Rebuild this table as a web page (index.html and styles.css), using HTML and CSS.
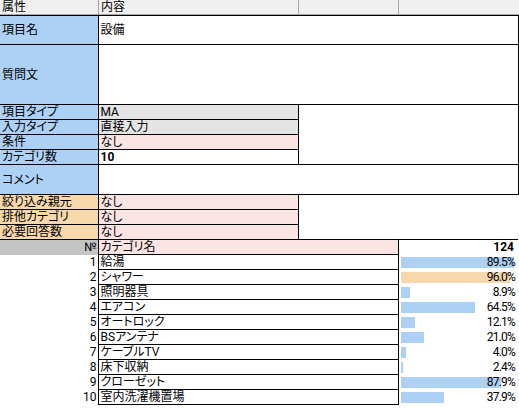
FILE: index.html
```html
<!DOCTYPE html>
<html lang="ja">
<head>
<meta charset="utf-8">
<title>設備</title>
<link rel="stylesheet" href="styles.css">
</head>
<body>
<div class="sheet">
  <div class="hdr">
    <div class="hc hc-a">属性</div>
    <div class="hc hc-b">内容</div>
    <div class="hc hc-c"></div>
    <div class="hc hc-d"></div>
  </div>
  <table class="grid">
    <colgroup><col class="ca"><col class="cb"><col class="cc"><col class="cd"></colgroup>
    <tr class="h29"><td class="lbl blue">項目名</td><td colspan="3" class="val edge">設備</td></tr>
    <tr class="h60"><td class="lbl blue">質問文</td><td colspan="3" class="val edge"></td></tr>
    <tr class="h15"><td class="lbl blue">項目タイプ</td><td class="val gray">MA</td><td colspan="2" rowspan="4" class="val edge"></td></tr>
    <tr class="h15"><td class="lbl blue">入力タイプ</td><td class="val gray">直接入力</td></tr>
    <tr class="h15"><td class="lbl blue">条件</td><td class="val pink">なし</td></tr>
    <tr class="h15"><td class="lbl blue">カテゴリ数</td><td class="val bold">10</td></tr>
    <tr class="h30"><td class="lbl blue">コメント</td><td colspan="3" class="val edge"></td></tr>
    <tr class="h15"><td class="lbl orange">絞り込み親元</td><td class="val pink">なし</td><td colspan="2" rowspan="3" class="blank"></td></tr>
    <tr class="h15"><td class="lbl orange">排他カテゴリ</td><td class="val pink">なし</td></tr>
    <tr class="h15"><td class="lbl orange">必要回答数</td><td class="val pink">なし</td></tr>
    <tr class="h15 cat-head"><td class="no-h">№</td><td colspan="2" class="val pink">カテゴリ名</td><td class="total">124</td></tr>
    <tr class="h15"><td class="no">1</td><td colspan="2" class="val">給湯</td><td class="barcell"><div class="bar-wrap"><div class="bar" style="width:113px"></div><span class="pct">89.5%</span></div></td></tr>
    <tr class="h15"><td class="no">2</td><td colspan="2" class="val">シャワー</td><td class="barcell"><div class="bar-wrap"><div class="bar bar-max" style="width:109px"></div><span class="pct">96.0%</span></div></td></tr>
    <tr class="h15"><td class="no">3</td><td colspan="2" class="val">照明器具</td><td class="barcell"><div class="bar-wrap"><div class="bar" style="width:9px"></div><span class="pct">8.9%</span></div></td></tr>
    <tr class="h15"><td class="no">4</td><td colspan="2" class="val">エアコン</td><td class="barcell"><div class="bar-wrap"><div class="bar" style="width:74px"></div><span class="pct">64.5%</span></div></td></tr>
    <tr class="h15"><td class="no">5</td><td colspan="2" class="val">オートロック</td><td class="barcell"><div class="bar-wrap"><div class="bar" style="width:14px"></div><span class="pct">12.1%</span></div></td></tr>
    <tr class="h15"><td class="no">6</td><td colspan="2" class="val">BSアンテナ</td><td class="barcell"><div class="bar-wrap"><div class="bar" style="width:23px"></div><span class="pct">21.0%</span></div></td></tr>
    <tr class="h15"><td class="no">7</td><td colspan="2" class="val">ケーブルTV</td><td class="barcell"><div class="bar-wrap"><div class="bar" style="width:5px"></div><span class="pct">4.0%</span></div></td></tr>
    <tr class="h15"><td class="no">8</td><td colspan="2" class="val">床下収納</td><td class="barcell"><div class="bar-wrap"><div class="bar" style="width:2px"></div><span class="pct">2.4%</span></div></td></tr>
    <tr class="h15"><td class="no">9</td><td colspan="2" class="val">クローゼット</td><td class="barcell"><div class="bar-wrap"><div class="bar" style="width:100px"></div><span class="pct">87.9%</span></div></td></tr>
    <tr class="h15 last"><td class="no">10</td><td colspan="2" class="val">室内洗濯機置場</td><td class="barcell"><div class="bar-wrap"><div class="bar" style="width:43px"></div><span class="pct">37.9%</span></div></td></tr>
  </table>
</div>
</body>
</html>
```

FILE: styles.css
```css
html, body {
  margin: 0;
  padding: 0;
  background: #ffffff;
}

.sheet {
  width: 519px;
  font-family: Roboto, "Noto Sans CJK JP", sans-serif;
  font-size: 12px;
  font-feature-settings: "palt";
  color: #000000;
}

.hdr {
  display: flex;
  height: 15px;
  box-sizing: border-box;
  background: #f0f0f0;
  border-bottom: 1px solid #a8a8a8;
}

.hc {
  box-sizing: border-box;
  border-right: 1px solid #a8a8a8;
  padding-left: 2px;
  line-height: 14px;
}

.hc-a { width: 99px; }
.hc-b { width: 200px; }
.hc-c { width: 100px; }
.hc-d { width: 120px; border-right: none; }

.grid {
  border-collapse: collapse;
  table-layout: fixed;
  width: 518px;
}

.ca { width: 98px; }
.cb { width: 200px; }
.cc { width: 100px; }
.cd { width: 120px; }

.grid td {
  padding: 1px 2px 0;
  line-height: 13px;
  vertical-align: middle;
  border: 1px solid #000000;
  white-space: nowrap;
  overflow: hidden;
}

.grid td.lbl {
  border-left: none;
}

.h29 td { height: 27px; }
.h60 td { height: 58px; }
.h30 td { height: 28px; }
.h15 td { height: 13px; }

.blue { background: #add0f5; }
.orange { background: #f7d8aa; }
.pink { background: #fbe4e4; }
.gray { background: #e4e4e4; }
.bold { font-weight: 700; }

.grid td.blank {
  border-right: none;
  border-bottom: none;
}

.grid td.no-h {
  background: #c4c4c4;
  text-align: right;
  border-left: none;
  border-bottom: none;
  padding-right: 1px;
}

.grid td.total {
  text-align: right;
  font-weight: 700;
  border-right: none;
  border-bottom: none;
  padding-right: 4px;
}

.grid td.no {
  text-align: right;
  border-left: none;
  border-top: none;
  border-bottom: none;
  padding-right: 1px;
}

.grid td.barcell {
  border-top: none;
  border-bottom: none;
  border-right: none;
  padding: 0 3px 0 2px;
}

.bar-wrap {
  display: grid;
  align-items: center;
  height: 14px;
}

.bar {
  grid-area: 1 / 1;
  height: 11px;
  background: #add0f5;
}

.bar-max {
  background: #f5d8ab;
}

.pct {
  grid-area: 1 / 1;
  justify-self: end;
  align-self: end;
  line-height: 13px;
  letter-spacing: -0.8px;
}
```
